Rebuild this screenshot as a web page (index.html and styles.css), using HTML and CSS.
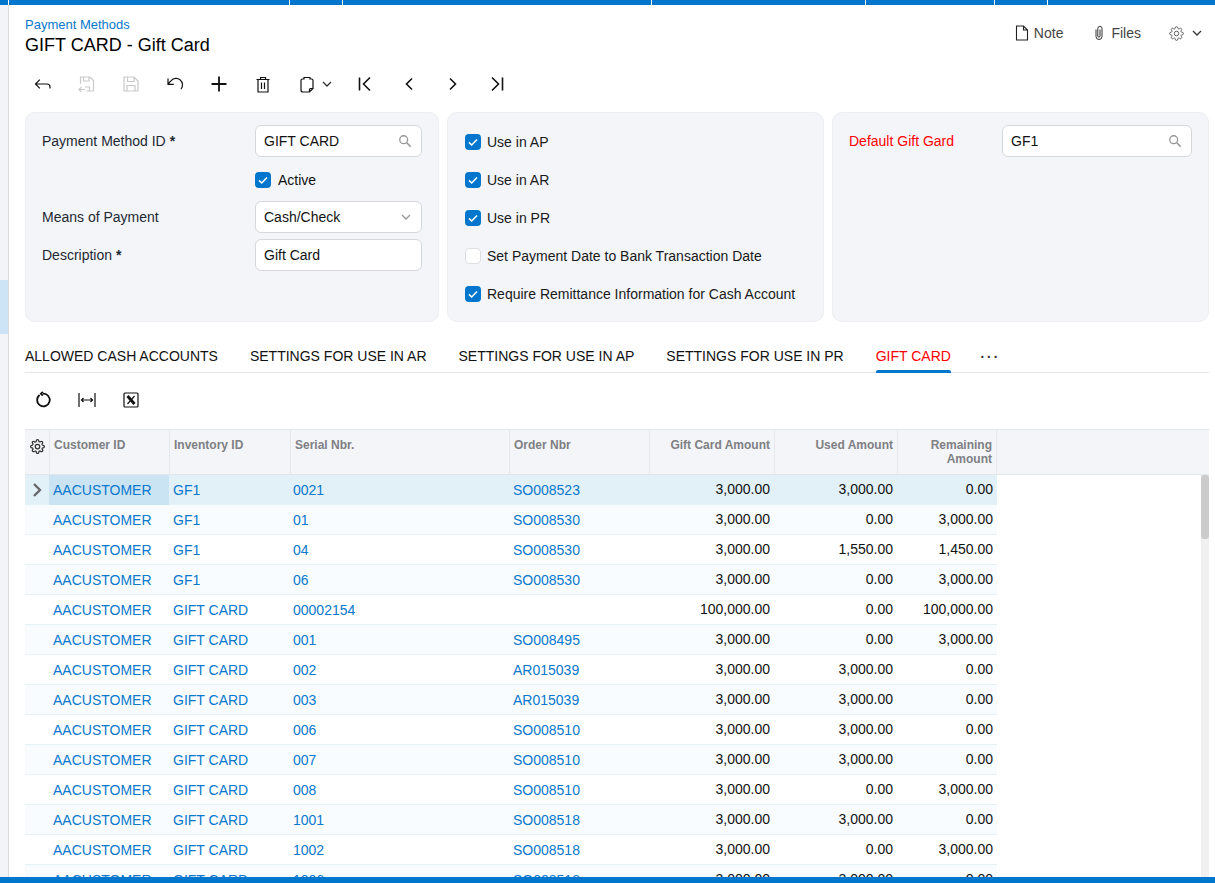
FILE: index.html
```html
<!DOCTYPE html>
<html lang="en">
<head>
    <meta charset="UTF-8">
    <meta name="viewport" content="width=device-width, initial-scale=1.0">
    <title>Payment Methods</title>
    <link rel="stylesheet" href="styles.css">
</head>
<body>
    <svg class="sprite">
        <symbol id="i-check" viewBox="0 0 16 16"><path d="M4 8.4l2.7 2.6L12 5.4" fill="none" stroke="#fff" stroke-width="1.5"/></symbol>
        <symbol id="i-search" viewBox="0 0 16 16"><circle cx="6.5" cy="6.5" r="4.5" fill="none" stroke="currentColor" stroke-width="1.5"/><path d="M10 10l4.5 4.5" fill="none" stroke="currentColor" stroke-width="1.8"/></symbol>
        <symbol id="i-down" viewBox="0 0 12 12"><path d="M2 4l4 4 4-4" fill="none" stroke="currentColor" stroke-width="1.3"/></symbol>
        <symbol id="i-gear" viewBox="0 0 24 24"><g fill="none" stroke="currentColor"><circle cx="12" cy="12" r="3.6"/><path d="M19.4 15a1.65 1.65 0 0 0 .33 1.82l.06.06a2 2 0 0 1 0 2.83 2 2 0 0 1-2.83 0l-.06-.06a1.65 1.65 0 0 0-1.82-.33 1.65 1.65 0 0 0-1 1.51V21a2 2 0 0 1-2 2 2 2 0 0 1-2-2v-.09A1.65 1.65 0 0 0 9 19.4a1.65 1.65 0 0 0-1.82.33l-.06.06a2 2 0 0 1-2.83 0 2 2 0 0 1 0-2.83l.06-.06a1.65 1.65 0 0 0 .33-1.82 1.65 1.65 0 0 0-1.51-1H3a2 2 0 0 1-2-2 2 2 0 0 1 2-2h.09A1.65 1.65 0 0 0 4.6 9a1.65 1.65 0 0 0-.33-1.82l-.06-.06a2 2 0 0 1 0-2.83 2 2 0 0 1 2.83 0l.06.06a1.65 1.65 0 0 0 1.82.33H9a1.65 1.65 0 0 0 1-1.51V3a2 2 0 0 1 2-2 2 2 0 0 1 2 2v.09a1.65 1.65 0 0 0 1 1.51 1.65 1.65 0 0 0 1.82-.33l.06-.06a2 2 0 0 1 2.83 0 2 2 0 0 1 0 2.83l-.06.06a1.65 1.65 0 0 0-.33 1.82V9a1.65 1.65 0 0 0 1.51 1H21a2 2 0 0 1 2 2 2 2 0 0 1-2 2h-.09a1.65 1.65 0 0 0-1.51 1z"/></g></symbol>
    </svg>

    <div class="top-bar">
        <span class="seg seg-a"></span><span class="seg seg-b"></span><span class="seg seg-c"></span><span class="seg seg-d"></span><span class="seg seg-e"></span><span class="seg seg-f"></span><span class="seg seg-g"></span><span class="seg seg-h"></span>
    </div>

    <div class="app">
        <div class="side-strip"><div class="side-active"></div></div>

        <main class="content">
            <header class="page-head">
                <div>
                    <a class="breadcrumb">Payment Methods</a>
                    <h1>GIFT CARD - Gift Card</h1>
                </div>
                <div class="head-actions">
                    <span class="head-btn">
                        <svg width="16" height="16" viewBox="0 0 16 16"><path d="M2.500 1h7L13.500 5v10h-11z M9.500 1v4h4" fill="none" stroke="#222" stroke-width="1.100"/></svg>
                        Note
                    </span>
                    <span class="head-btn">
                        <svg width="16" height="16" viewBox="0 0 16 16"><path d="M5 4.500V11.500a3 3 0 0 0 6 0V3.500a2.100 2.100 0 0 0-4.200 0V11a1.100 1.100 0 0 0 2.200 0V4.500" fill="none" stroke="#333" stroke-width="1"/></svg>
                        Files
                    </span>
                    <span class="head-btn gear-btn">
                        <svg class="gear-icon" width="15" height="15"><use href="#i-gear"/></svg>
                        <svg class="down-icon" width="12" height="12"><use href="#i-down"/></svg>
                    </span>
                </div>
            </header>

            <div class="toolbar">
                <button class="tool"><svg width="20" height="20" viewBox="0 0 20 20"><path d="M2.500 10H14a3 3 0 0 1 3 3v1.500M6.800 5.700L2.500 10l4.300 4.300"/></svg></button>
                <button class="tool off"><svg width="20" height="20" viewBox="0 0 20 20"><path d="M3.500 10V3H13l3.500 3.500V17H9.500M6.500 3v4H12V3M12.500 17v-4H8M2 15.500h6M4.500 13L2 15.500 4.500 18"/></svg></button>
                <button class="tool off"><svg width="20" height="20" viewBox="0 0 20 20"><path d="M3 3H13L17 7V17H3zM6.500 3v4.500H13V3M6 17v-5.500h8V17"/></svg></button>
                <button class="tool"><svg width="20" height="20" viewBox="0 0 20 20"><path d="M16 15a6 6 0 0 0-9.800-8.300L3 10M3 4.500v5.800h5.800"/></svg></button>
                <button class="tool"><svg width="20" height="20" viewBox="0 0 20 20"><path class="bold" d="M10 2.500v15M2.500 10h15"/></svg></button>
                <button class="tool"><svg width="20" height="20" viewBox="0 0 20 20"><path d="M3.500 5.500h13M7.500 5.500V3.500h5v2M5 5.500V18h10V5.500M8.500 8.500v6.500M11.500 8.500v6.500"/></svg></button>
                <button class="tool tool-drop"><svg width="20" height="20" viewBox="0 0 20 20"><path d="M7 5H5.500A1.500 1.500 0 0 0 4 6.500V16a2 2 0 0 0 2 2h6.500l3.500-3.500V6.500A1.500 1.500 0 0 0 14.500 5H13M7 5.500V3.500h6v2M12.500 18v-2.500a1 1 0 0 1 1-1H16"/></svg><svg class="down-icon" width="12" height="12"><use href="#i-down"/></svg></button>
                <button class="tool"><svg width="20" height="20" viewBox="0 0 20 20"><path class="nav" d="M4.500 3.500v13M15 3.500L8.500 10l6.500 6.500"/></svg></button>
                <button class="tool"><svg width="20" height="20" viewBox="0 0 20 20"><path class="nav" d="M13 4.500L7.500 10l5.500 5.500"/></svg></button>
                <button class="tool"><svg width="20" height="20" viewBox="0 0 20 20"><path class="nav" d="M7 4.500L12.500 10 7 15.500"/></svg></button>
                <button class="tool"><svg width="20" height="20" viewBox="0 0 20 20"><path class="nav" d="M15.500 3.500v13M5 3.500l6.500 6.500L5 16.500"/></svg></button>
            </div>

            <section class="panels">
                <div class="panel form-panel">
                    <label class="field-label">Payment Method ID <b>*</b></label>
                    <div class="input">GIFT CARD<svg class="field-icon" width="14" height="14"><use href="#i-search"/></svg></div>
                    <div class="check-cell">
                        <span class="check on"><svg width="16" height="16"><use href="#i-check"/></svg></span>Active
                    </div>
                    <label class="field-label">Means of Payment</label>
                    <div class="input">Cash/Check<svg class="field-icon" width="12" height="12"><use href="#i-down"/></svg></div>
                    <label class="field-label">Description <b>*</b></label>
                    <div class="input">Gift Card</div>
                </div>

                <div class="panel check-panel">
                    <div class="check-row"><span class="check on"><svg width="16" height="16"><use href="#i-check"/></svg></span>Use in AP</div>
                    <div class="check-row"><span class="check on"><svg width="16" height="16"><use href="#i-check"/></svg></span>Use in AR</div>
                    <div class="check-row"><span class="check on"><svg width="16" height="16"><use href="#i-check"/></svg></span>Use in PR</div>
                    <div class="check-row"><span class="check"></span>Set Payment Date to Bank Transaction Date</div>
                    <div class="check-row"><span class="check on"><svg width="16" height="16"><use href="#i-check"/></svg></span>Require Remittance Information for Cash Account</div>
                </div>

                <div class="panel gift-panel">
                    <label class="field-label red">Default Gift Gard</label>
                    <div class="input">GF1<svg class="field-icon" width="14" height="14"><use href="#i-search"/></svg></div>
                </div>
            </section>

            <nav class="tabs">
                <a class="tab">ALLOWED CASH ACCOUNTS</a>
                <a class="tab">SETTINGS FOR USE IN AR</a>
                <a class="tab">SETTINGS FOR USE IN AP</a>
                <a class="tab">SETTINGS FOR USE IN PR</a>
                <a class="tab active">GIFT CARD</a>
                <span class="tab-more">&middot;&middot;&middot;</span>
            </nav>

            <div class="toolbar grid-tools">
                <button class="tool"><svg width="20" height="20" viewBox="0 0 20 20"><path class="bold" d="M6.600 5A6.300 6.300 0 1 0 10 3.700M9.800 1.800L7.900 3.700l1.900 1.900"/></svg></button>
                <button class="tool"><svg width="20" height="20" viewBox="0 0 20 20"><path d="M2 3v14M18 3v14M4.500 10h11M6.500 8l-2 2 2 2M13.500 8l2 2-2 2"/></svg></button>
                <button class="tool"><svg width="20" height="20" viewBox="0 0 20 20"><rect x="3" y="3" width="14" height="14" rx="1"/><path class="x-thick" d="M6.500 6l7 8"/><path d="M13.500 6l-7 8"/></svg></button>
            </div>

            <section class="grid">
                <div class="grid-head">
                    <div class="head-cell gear-cell"><svg width="15" height="15"><use href="#i-gear"/></svg></div>
                    <div class="head-cell">Customer ID</div>
                    <div class="head-cell">Inventory ID</div>
                    <div class="head-cell">Serial Nbr.</div>
                    <div class="head-cell">Order Nbr</div>
                    <div class="head-cell num">Gift Card Amount</div>
                    <div class="head-cell num">Used Amount</div>
                    <div class="head-cell num">Remaining Amount</div>
                </div>
                <div class="grid-body">
                    <div class="grid-rows">
                        <div class="grid-row selected">
                            <div class="cell marker"><svg width="12" height="16" viewBox="0 0 12 16"><path d="M3 2l6 6-6 6" fill="none" stroke="#666" stroke-width="2.300"/></svg></div>
                            <div class="cell current"><a>AACUSTOMER</a></div><div class="cell"><a>GF1</a></div><div class="cell"><a>0021</a></div><div class="cell"><a>SO008523</a></div>
                            <div class="cell num">3,000.00</div><div class="cell num">3,000.00</div><div class="cell num">0.00</div>
                        </div>
                        <div class="grid-row">
                            <div class="cell"></div>
                            <div class="cell"><a>AACUSTOMER</a></div><div class="cell"><a>GF1</a></div><div class="cell"><a>01</a></div><div class="cell"><a>SO008530</a></div>
                            <div class="cell num">3,000.00</div><div class="cell num">0.00</div><div class="cell num">3,000.00</div>
                        </div>
                        <div class="grid-row">
                            <div class="cell"></div>
                            <div class="cell"><a>AACUSTOMER</a></div><div class="cell"><a>GF1</a></div><div class="cell"><a>04</a></div><div class="cell"><a>SO008530</a></div>
                            <div class="cell num">3,000.00</div><div class="cell num">1,550.00</div><div class="cell num">1,450.00</div>
                        </div>
                        <div class="grid-row">
                            <div class="cell"></div>
                            <div class="cell"><a>AACUSTOMER</a></div><div class="cell"><a>GF1</a></div><div class="cell"><a>06</a></div><div class="cell"><a>SO008530</a></div>
                            <div class="cell num">3,000.00</div><div class="cell num">0.00</div><div class="cell num">3,000.00</div>
                        </div>
                        <div class="grid-row">
                            <div class="cell"></div>
                            <div class="cell"><a>AACUSTOMER</a></div><div class="cell"><a>GIFT CARD</a></div><div class="cell"><a>00002154</a></div><div class="cell"></div>
                            <div class="cell num">100,000.00</div><div class="cell num">0.00</div><div class="cell num">100,000.00</div>
                        </div>
                        <div class="grid-row">
                            <div class="cell"></div>
                            <div class="cell"><a>AACUSTOMER</a></div><div class="cell"><a>GIFT CARD</a></div><div class="cell"><a>001</a></div><div class="cell"><a>SO008495</a></div>
                            <div class="cell num">3,000.00</div><div class="cell num">0.00</div><div class="cell num">3,000.00</div>
                        </div>
                        <div class="grid-row">
                            <div class="cell"></div>
                            <div class="cell"><a>AACUSTOMER</a></div><div class="cell"><a>GIFT CARD</a></div><div class="cell"><a>002</a></div><div class="cell"><a>AR015039</a></div>
                            <div class="cell num">3,000.00</div><div class="cell num">3,000.00</div><div class="cell num">0.00</div>
                        </div>
                        <div class="grid-row">
                            <div class="cell"></div>
                            <div class="cell"><a>AACUSTOMER</a></div><div class="cell"><a>GIFT CARD</a></div><div class="cell"><a>003</a></div><div class="cell"><a>AR015039</a></div>
                            <div class="cell num">3,000.00</div><div class="cell num">3,000.00</div><div class="cell num">0.00</div>
                        </div>
                        <div class="grid-row">
                            <div class="cell"></div>
                            <div class="cell"><a>AACUSTOMER</a></div><div class="cell"><a>GIFT CARD</a></div><div class="cell"><a>006</a></div><div class="cell"><a>SO008510</a></div>
                            <div class="cell num">3,000.00</div><div class="cell num">3,000.00</div><div class="cell num">0.00</div>
                        </div>
                        <div class="grid-row">
                            <div class="cell"></div>
                            <div class="cell"><a>AACUSTOMER</a></div><div class="cell"><a>GIFT CARD</a></div><div class="cell"><a>007</a></div><div class="cell"><a>SO008510</a></div>
                            <div class="cell num">3,000.00</div><div class="cell num">3,000.00</div><div class="cell num">0.00</div>
                        </div>
                        <div class="grid-row">
                            <div class="cell"></div>
                            <div class="cell"><a>AACUSTOMER</a></div><div class="cell"><a>GIFT CARD</a></div><div class="cell"><a>008</a></div><div class="cell"><a>SO008510</a></div>
                            <div class="cell num">3,000.00</div><div class="cell num">0.00</div><div class="cell num">3,000.00</div>
                        </div>
                        <div class="grid-row">
                            <div class="cell"></div>
                            <div class="cell"><a>AACUSTOMER</a></div><div class="cell"><a>GIFT CARD</a></div><div class="cell"><a>1001</a></div><div class="cell"><a>SO008518</a></div>
                            <div class="cell num">3,000.00</div><div class="cell num">3,000.00</div><div class="cell num">0.00</div>
                        </div>
                        <div class="grid-row">
                            <div class="cell"></div>
                            <div class="cell"><a>AACUSTOMER</a></div><div class="cell"><a>GIFT CARD</a></div><div class="cell"><a>1002</a></div><div class="cell"><a>SO008518</a></div>
                            <div class="cell num">3,000.00</div><div class="cell num">0.00</div><div class="cell num">3,000.00</div>
                        </div>
                        <div class="grid-row">
                            <div class="cell"></div>
                            <div class="cell"><a>AACUSTOMER</a></div><div class="cell"><a>GIFT CARD</a></div><div class="cell"><a>1006</a></div><div class="cell"><a>SO008518</a></div>
                            <div class="cell num">3,000.00</div><div class="cell num">3,000.00</div><div class="cell num">0.00</div>
                        </div>
                    </div>
                    <div class="scrollbar"><div class="scroll-thumb"></div></div>
                </div>
            </section>
        </main>
    </div>

    <div class="bottom-bar"></div>
</body>
</html>
```

FILE: styles.css
```css
* {
    box-sizing: border-box;
}

html, body {
    height: 100%;
}

body {
    margin: 0;
    display: flex;
    flex-direction: column;
    overflow: hidden;
    font-family: "Liberation Sans", Arial, sans-serif;
    font-size: 14px;
    color: #111;
    background: #fff;
}

.sprite {
    display: none;
}

/* top and bottom bars */
.top-bar {
    display: flex;
    flex: 0 0 5px;
    background: #0077cc;
}

.seg {
    border-right: 1px solid #fff;
}

.seg-a { width: 9px; }
.seg-b { width: 281px; }
.seg-c { width: 53px; }
.seg-d { width: 309px; }
.seg-e { width: 214px; }
.seg-f { width: 129px; }
.seg-g { width: 53px; }
.seg-h { flex: 1; border-right: none; }

.bottom-bar {
    flex: 0 0 6px;
    background: #0077cc;
}

.app {
    display: flex;
    flex: 1;
    min-height: 0;
}

.side-strip {
    flex: 0 0 9px;
    padding-top: 275px;
    background: #f3f4f7;
    border-right: 1px solid #d9dadd;
}

.side-active {
    height: 54px;
    background: #cce4f5;
}

.content {
    flex: 1;
    min-width: 0;
    padding: 0 6px 0 16px;
    overflow: hidden;
}

/* page header */
.page-head {
    display: flex;
    justify-content: space-between;
    height: 63px;
    padding-top: 12px;
}

.breadcrumb {
    display: block;
    font-size: 13px;
    line-height: 15px;
    color: #0a78cc;
}

h1 {
    margin: 3px 0 0;
    font-size: 18px;
    font-weight: 400;
    line-height: 21px;
    color: #000;
}

.head-actions {
    display: flex;
    align-items: flex-start;
    padding-top: 8px;
}

.head-btn {
    display: flex;
    align-items: center;
    gap: 4px;
    height: 16px;
    margin-left: 28px;
    color: #444;
}

.gear-btn {
    gap: 7px;
    margin-right: 6px;
}

.gear-icon {
    color: #555;
    stroke-width: 1.5;
}

.down-icon {
    color: #333;
}

/* toolbars */
.toolbar {
    display: flex;
    height: 32px;
    margin-left: -4px;
}

.tool {
    display: flex;
    align-items: center;
    justify-content: center;
    gap: 4px;
    width: 44px;
    height: 32px;
    padding: 0;
    border: none;
    background: none;
}

.tool svg path,
.tool svg rect {
    fill: none;
    stroke: #111;
    stroke-width: 1.2;
}

.tool svg path.bold {
    stroke-width: 1.8;
}

.tool svg path.nav {
    stroke-width: 1.6;
}

.tool svg path.x-thick {
    stroke-width: 2.8;
}

.tool.off svg path {
    stroke: #c9c9c9;
}

.tool-drop {
    width: 58px;
    padding-left: 2px;
}

/* top panels */
.panels {
    display: grid;
    grid-template-columns: 414px 377px 377px;
    gap: 8px;
    height: 210px;
    margin-top: 12px;
}

.panel {
    background: #f3f5f8;
    border: 1px solid #eceef1;
    border-radius: 10px;
    padding: 12px 16px;
}

.form-panel {
    display: grid;
    grid-template-columns: 213px 167px;
    grid-auto-rows: 32px;
    row-gap: 6px;
    align-items: center;
    align-content: start;
}

.gift-panel {
    display: grid;
    grid-template-columns: 153px 190px;
    grid-auto-rows: 32px;
    align-items: center;
}

.field-label {
    color: #1f2933;
}

.field-label b {
    font-weight: 700;
}

.red {
    color: #f00;
}

.input {
    display: flex;
    align-items: center;
    justify-content: space-between;
    height: 32px;
    padding: 0 9px 0 8px;
    background: #fff;
    border: 1px solid #d5d7db;
    border-radius: 6px;
    color: #111;
}

.field-icon {
    color: #969696;
}

.check-cell {
    grid-column: 2;
    display: flex;
    align-items: center;
    gap: 7px;
    padding-top: 2px;
}

.check {
    flex: 0 0 16px;
    width: 16px;
    height: 16px;
    background: #fff;
    border: 1px solid #dcdee2;
    border-radius: 4px;
}

.check.on {
    background: #0077cc;
    border: none;
}

.check svg {
    display: block;
}

.check-panel {
    display: flex;
    flex-direction: column;
    gap: 22px;
    padding: 21px 0 0 17px;
}

.check-row {
    display: flex;
    align-items: center;
    gap: 6px;
    height: 16px;
    color: #1a1a1a;
}

/* tabs */
.tabs {
    display: flex;
    align-items: stretch;
    gap: 32px;
    height: 51px;
    padding-top: 25px;
    border-bottom: 1px solid #e3e5e8;
}

.tab {
    position: relative;
    color: #111;
    line-height: 18px;
}

.tab.active {
    color: #f00;
}

.tab.active::after {
    content: "";
    position: absolute;
    left: 0;
    right: 0;
    bottom: -1px;
    height: 3px;
    background: #0077cc;
    border-radius: 2px 2px 0 0;
}

.tab-more {
    margin-left: -4px;
    font-size: 20px;
    line-height: 16px;
    color: #333;
}

.grid-tools {
    margin-top: 11px;
    margin-bottom: 13px;
}

/* grid */
.grid-head,
.grid-row {
    display: grid;
    grid-template-columns: 24px 120px 120px 220px 140px 125px 123px 100px;
}

.grid-head {
    grid-template-columns: 25px 120px 121px 219px 140px 125px 123px 99px;
    height: 46px;
    background: #f3f5f8;
    border-top: 1px solid #e3e5e8;
    border-bottom: 1px solid #e3e5e8;
}

.head-cell {
    padding: 8px 4px 0 4px;
    border-right: 1px solid #e6e8eb;
    font-size: 12px;
    font-weight: 700;
    line-height: 14px;
    color: #7f7f84;
}

.gear-cell {
    padding: 9px 0 0 5px;
    color: #333;
    stroke-width: 2;
}

.num {
    text-align: right;
}

.grid-body {
    display: flex;
    justify-content: space-between;
}

.grid-rows {
    width: 972px;
}

.grid-row {
    height: 30px;
    border-bottom: 1px solid #e5f0f7;
    background: #fff;
}

.grid-row:nth-child(even) {
    background: #f8fcfe;
}

.grid-row.selected {
    background: #e2f0f8;
}

.cell {
    padding: 0 4px;
    line-height: 30px;
    color: #111;
    white-space: nowrap;
}

.cell.num {
    line-height: 28px;
}

.cell a {
    color: #0a78cc;
}

.cell.current {
    background: #cbe4f4;
}

.marker {
    padding: 7px 0 0 6px;
    line-height: 0;
}

.scrollbar {
    flex: 0 0 8px;
    background: #f0f0f0;
}

.scroll-thumb {
    height: 64px;
    background: #cbcbcb;
    border-radius: 3px;
}
```
